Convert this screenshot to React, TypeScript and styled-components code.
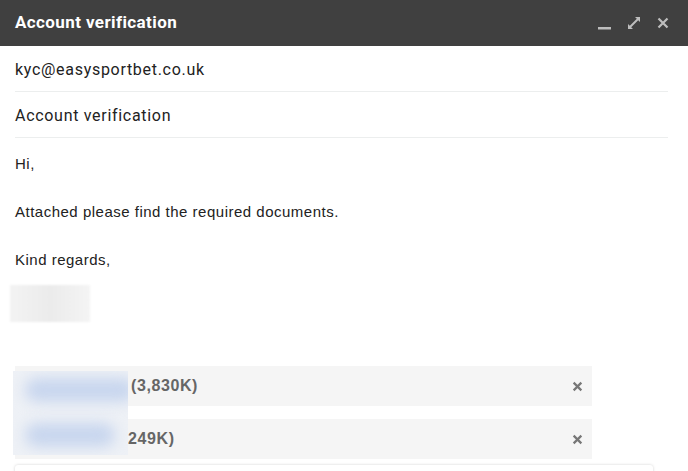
import React from 'react';
import styled, { createGlobalStyle } from 'styled-components';

const Global = createGlobalStyle`
  html, body { margin: 0; padding: 0; background: #fff; }
  body { width: 688px; height: 471px; overflow: hidden; }
`;

const Window = styled.div`
  position: relative;
  width: 688px;
  height: 471px;
  overflow: hidden;
  background: #fff;
  font-family: Roboto, "Liberation Sans", Arial, sans-serif;
`;

const TitleBar = styled.div`
  height: 46px;
  background: #404040;
  display: flex;
  align-items: center;
  padding: 0 19px 0 15px;
`;

const Title = styled.div`
  flex: 1;
  color: #fff;
  font-size: 17px;
  font-weight: 700;
  letter-spacing: 0.4px;
  margin-top: -2px;
`;

const Controls = styled.div`
  display: flex;
  align-items: center;
  gap: 16px;
  margin-top: -1px;
`;

const Field = styled.div`
  margin: 0 20px 0 15px;
  height: 44px;
  display: flex;
  align-items: center;
  border-bottom: 1px solid #eceeee;
  color: #222;
  font-size: 16px;
  letter-spacing: 0.7px;
  padding-top: 1px;
`;

const Body = styled.div`
  padding: 17px 15px 0;
  font-family: "Liberation Sans", Arial, sans-serif;
  font-size: 15px;
  letter-spacing: 0.5px;
  color: #222;
  p {
    margin: 0 0 31px;
    line-height: 17px;
  }
`;

const Signature = styled.div`
  width: 80px;
  height: 37px;
  margin: -14px 0 0 -5px;
  background: linear-gradient(90deg, #f3f3f3, #ebebeb 50%, #f4f4f4);
  filter: blur(1px);
`;

const Attachments = styled.div`
  position: relative;
  margin: 44px 0 0 15px;
  width: 577px;
  display: flex;
  flex-direction: column;
  gap: 13px;
`;

const Chip = styled.div<{ $indent: number }>`
  height: 40px;
  background: #f5f5f5;
  display: flex;
  align-items: center;
  padding-left: ${(p) => p.$indent}px;
  padding-right: 9px;
  font-family: "Liberation Sans", Arial, sans-serif;
  font-weight: bold;
  font-size: 16px;
  letter-spacing: 0.6px;
  color: #666;
`;

const Size = styled.span`
  flex: 1;
`;

const Blur = styled.div`
  position: absolute;
  left: -2px;
  top: 5px;
  width: 115px;
  height: 84px;
  background: #eef1f6;
  overflow: hidden;
`;

const Blob = styled.div<{ $top: number; $w: number }>`
  position: absolute;
  left: 12px;
  top: ${(p) => p.$top}px;
  width: ${(p) => p.$w}px;
  height: 24px;
  border-radius: 12px;
  background: #c8d6ee;
  filter: blur(7px);
`;

const Compose = styled.div`
  position: absolute;
  left: 15px;
  top: 465px;
  width: 638px;
  height: 40px;
  border-radius: 3px;
  background: #fff;
  box-shadow: 0 0 3px rgba(0, 0, 0, 0.18);
`;

const CloseX = () => (
  <svg width="11" height="11" viewBox="0 0 10 10">
    <path d="M1.5 1.5 L8.5 8.5 M8.5 1.5 L1.5 8.5" stroke="#777" strokeWidth="2" />
  </svg>
);

export default function App() {
  return (
    <Window>
      <Global />
      <TitleBar>
        <Title>Account verification</Title>
        <Controls>
          <svg width="13" height="14" viewBox="0 0 13 14">
            <rect x="0" y="11" width="13" height="2.5" fill="#bdbdbd" />
          </svg>
          <svg width="14" height="14" viewBox="0 0 14 14">
            <path d="M8 1 H13 V6 L11.2 4.2 L4.2 11.2 L6 13 H1 V8 L2.8 9.8 L9.8 2.8 Z" fill="#bdbdbd" />
          </svg>
          <svg width="12" height="12" viewBox="0 0 12 12">
            <path d="M1.5 1.5 L10.5 10.5 M10.5 1.5 L1.5 10.5" stroke="#bdbdbd" strokeWidth="2.2" />
          </svg>
        </Controls>
      </TitleBar>
      <Field>kyc@easysportbet.co.uk</Field>
      <Field>Account verification</Field>
      <Body>
        <p>Hi,</p>
        <p>Attached please find the required documents.</p>
        <p>Kind regards,</p>
        <Signature />
      </Body>
      <Attachments>
        <Chip $indent={116}>
          <Size>(3,830K)</Size>
          <CloseX />
        </Chip>
        <Chip $indent={113}>
          <Size>249K)</Size>
          <CloseX />
        </Chip>
        <Blur>
          <Blob $top={7} $w={110} />
          <Blob $top={52} $w={90} />
        </Blur>
      </Attachments>
      <Compose />
    </Window>
  );
}
